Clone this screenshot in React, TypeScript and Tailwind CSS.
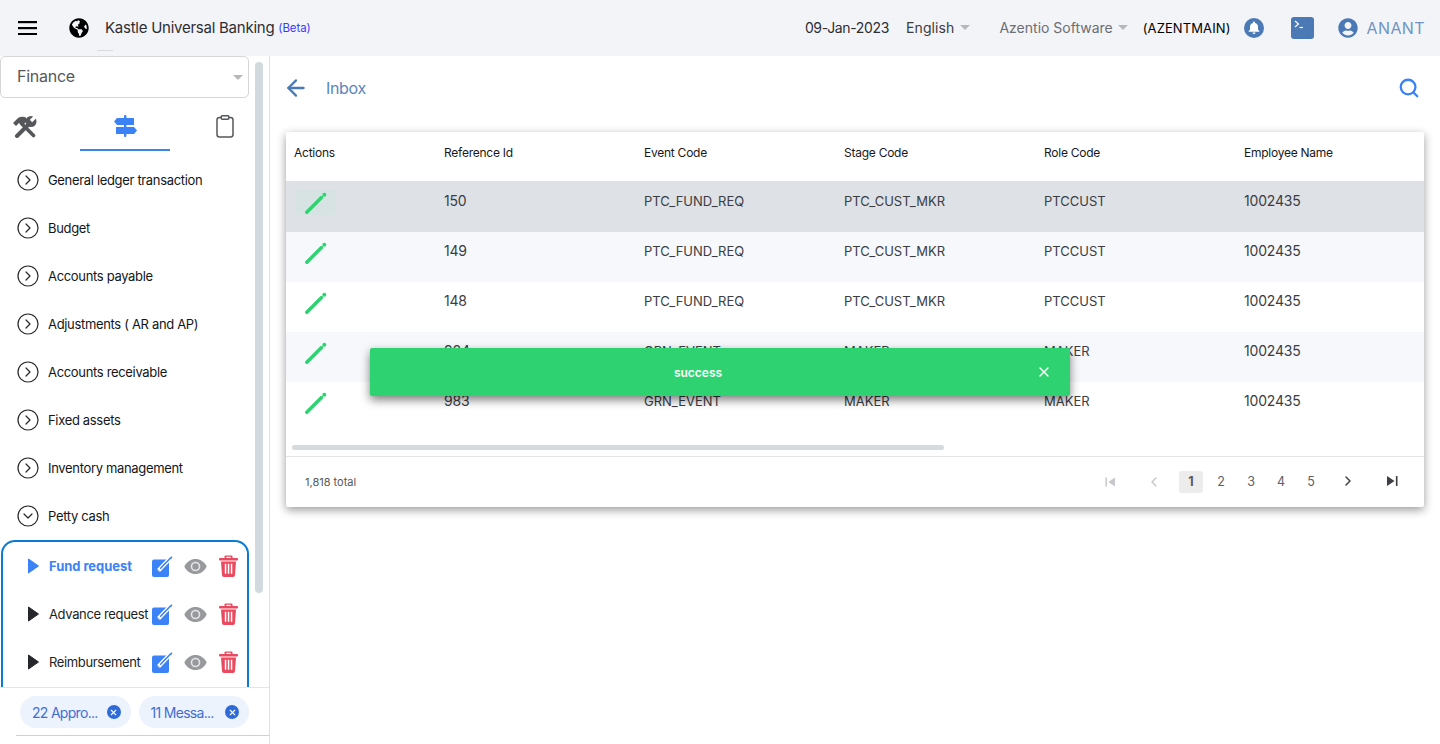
import React from "react";
import { ArrowLeft, Search, CircleChevronRight, CircleChevronDown, ChevronLeft, ChevronRight, X } from "lucide-react";
import { FaGlobeAmericas, FaUserCircle } from "react-icons/fa";

const menu = ["General ledger transaction", "Budget", "Accounts payable", "Adjustments ( AR and AP)", "Accounts receivable", "Fixed assets", "Inventory management"];
const rows = [
  ["150", "PTC_FUND_REQ", "PTC_CUST_MKR", "PTCCUST", "1002435"],
  ["149", "PTC_FUND_REQ", "PTC_CUST_MKR", "PTCCUST", "1002435"],
  ["148", "PTC_FUND_REQ", "PTC_CUST_MKR", "PTCCUST", "1002435"],
  ["984", "GRN_EVENT", "MAKER", "MAKER", "1002435"],
  ["983", "GRN_EVENT", "MAKER", "MAKER", "1002435"],
];
const rowBg = ["bg-[#dee1e6] h-[51px] pt-[11px]", "bg-[#f7f8fb] h-[50px] pt-[10px]", "bg-white h-[50px] pt-[10px]", "bg-[#f7f8fb] h-[50px] pt-[10px]", "bg-white h-[50px] pt-[10px]"];

function Caret() {
  return <span className="inline-block w-0 h-0 border-x-[5px] border-x-transparent border-t-[5px] border-t-[#b5b7bb]" />;
}

function Pen() {
  return (
    <svg width="22" height="22" viewBox="0 0 22 22" fill="none">
      <path d="M1.800 20.200 L16.500 5.500" stroke="#2ed271" strokeWidth="3.400" strokeLinecap="round" />
      <circle cx="19.300" cy="2.700" r="2" fill="#2ed271" />
    </svg>
  );
}

function ToolsIcon() {
  return (
    <svg width="24" height="22" viewBox="0 0 24 22" fill="#55575a">
      <path d="M9 8 L20.500 19.500" stroke="#55575a" strokeWidth="3.600" strokeLinecap="round" />
      <path d="M0 7 L5 2 Q8 0 12 1 L15 4 L9 10 L6 7 L3 10 Z" />
      <path d="M17 7 L4 20" stroke="#55575a" strokeWidth="4" strokeLinecap="round" />
      <circle cx="18" cy="5.500" r="5.500" />
      <path d="M18 5 L24 -1" stroke="#fff" strokeWidth="3.400" />
    </svg>
  );
}

function EyeIcon() {
  return (
    <svg width="23" height="17" viewBox="0 0 23 17">
      <path d="M0.300 8.500 C5 -1.500 18 -1.500 22.700 8.500 C18 18.500 5 18.500 0.300 8.500 Z" fill="#97999d" />
      <circle cx="11.500" cy="8.500" r="4.800" fill="#e4e5e6" />
      <circle cx="11.500" cy="8.500" r="3.200" fill="#97999d" />
    </svg>
  );
}

function EditIcon() {
  return (
    <svg width="21" height="21" viewBox="0 0 21 21">
      <rect x="0" y="3.500" width="17" height="17.500" rx="2" fill="#3b82f6" />
      <path d="M6.500 14.500 L18 2.500" stroke="#fff" strokeWidth="4" />
      <path d="M6.500 14.500 L18 2.500 L20 1" stroke="#3b82f6" strokeWidth="1.600" fill="none" />
      <path d="M6 15 L7 11.500 L9.500 14 Z" fill="#fff" />
    </svg>
  );
}

function TrashIcon() {
  return (
    <svg width="19" height="22" viewBox="0 0 19 22" fill="#ea4a5f">
      <path d="M6.500 0.500 h6 a1 1 0 0 1 1 1 v1.500 h4.500 a1 1 0 0 1 0 2.400 h-17 a1 1 0 0 1 0 -2.400 h4.500 v-1.500 a1 1 0 0 1 1 -1 z M7.300 1.800 v1.200 h4.400 v-1.200 z" fillRule="evenodd" />
      <path d="M2 6.500 h15 l-1 13.500 a2 2 0 0 1 -2 2 h-9 a2 2 0 0 1 -2 -2 z M5.800 8.800 v10 h1.500 v-10 z M8.800 8.800 v10 h1.500 v-10 z M11.800 8.800 v10 h1.500 v-10 z" fillRule="evenodd" />
    </svg>
  );
}

function SignsIcon() {
  return (
    <svg width="23" height="22" viewBox="0 0 23 22" fill="#3b82f6">
      <rect x="10" y="0" width="2.400" height="22" rx="1" />
      <path d="M0 6.500 L3 3 H20 V10 H3 Z" />
      <path d="M2 12 H20 L23 15.500 L20 19 H2 Z" />
    </svg>
  );
}

function ClipboardIcon() {
  return (
    <svg width="18" height="23" viewBox="0 0 18 23" fill="none" stroke="#55575a" strokeWidth="1.500">
      <rect x="1" y="2.500" width="16" height="19.500" rx="2.500" />
      <rect x="5.200" y="0.800" width="7.600" height="3.400" rx="1" fill="#fff" />
    </svg>
  );
}

function SubItem({ label, active }: { label: string; active?: boolean }) {
  return (
    <div className="h-12 flex items-center pl-[25px] relative">
      <svg width="11" height="16" viewBox="0 0 11 16" className="shrink-0">
        <path d="M0.500 1 L10.500 8 L0.500 15 Z" fill={active ? "#3b82f6" : "#25272b"} stroke={active ? "#3b82f6" : "#25272b"} strokeLinejoin="round" />
      </svg>
      <span className={`ml-[10px] w-[103px] whitespace-nowrap text-[13px] mt-[1px] ${active ? "font-bold text-[#3b82f6] tracking-[-0.05px]" : "text-[#1c1e22] tracking-[-0.36px]"}`}>{label}</span>
      <span className="shrink-0"><EditIcon /></span>
      <span className="ml-[11px] flex"><EyeIcon /></span>
      <span className="ml-[12px]"><TrashIcon /></span>
    </div>
  );
}

function Chip({ label }: { label: string }) {
  return (
    <div className="h-8 rounded-2xl bg-[#edf3fd] flex items-center pl-3 pr-[10px] text-[14px] tracking-[-0.7px] text-[#3f6ed6] w-[110.500px] justify-between">
      <span className="whitespace-nowrap">{label}</span>
      <span className="w-[14px] h-[14px] rounded-full bg-[#2f6bd8] flex items-center justify-center">
        <X size={9} color="#fff" strokeWidth={3} />
      </span>
    </div>
  );
}

function PageEdge({ last, color }: { last?: boolean; color: string }) {
  return (
    <svg width="12" height="12" viewBox="0 0 12 12" style={last ? { transform: "scaleX(-1)" } : undefined}>
      <rect x="0.500" y="1" width="1.600" height="10" fill={color} />
      <path d="M11 1 L3.500 6 L11 11 Z" fill={color} />
    </svg>
  );
}

export default function App() {
  return (
    <div className="w-[1440px] h-[744px] overflow-hidden flex flex-col bg-white relative font-['Inter',sans-serif]">
      <header className="h-14 shrink-0 bg-[#f3f4f8] flex items-center relative">
        <svg width="20" height="14" viewBox="0 0 20 14" className="ml-[18px]">
          <rect y="0" width="19" height="2.200" fill="#000" />
          <rect y="6" width="19" height="2.200" fill="#000" />
          <rect y="12" width="19" height="2.200" fill="#000" />
        </svg>
        <span className="ml-[31px] text-black"><FaGlobeAmericas size={20} /></span>
        <span className="ml-4 text-[15px] tracking-[-0.25px] text-[#2c2e33] whitespace-nowrap">Kastle Universal Banking</span>
        <span className="ml-[4px] mt-[2px] text-[11.500px] tracking-[-0.1px] text-[#3c3cf5]">(Beta)</span>
        <div className="ml-auto flex items-center pr-[15px] text-[14px]">
          <span className="text-[#2c2e33] tracking-[-0.35px] -mt-[2px]">09-Jan-2023</span>
          <span className="ml-[17px] text-[#3a3c40] tracking-[0.1px] -mt-[2px]">English</span>
          <span className="ml-[6px] mb-[2px] flex"><Caret /></span>
          <span className="ml-[29px] text-[#6b6e73] -mt-[2px]">Azentio Software</span>
          <span className="ml-[5px] mb-[2px] flex"><Caret /></span>
          <span className="ml-[15px] text-[13px] text-black tracking-[0.1px] translate-y-[1px]">(AZENTMAIN)</span>
          <span className="ml-[14px] w-5 h-5 rounded-full bg-[#4a79b5] flex items-center justify-center">
            <svg width="12" height="14" viewBox="0 0 12 14" fill="#fff">
              <path d="M6 0.500 a1 1 0 0 1 1 1 v0.400 c2 .5 3 2 3 4 v2.600 l1.400 1.700 v.6 h-10.800 v-.6 l1.400 -1.700 v-2.600 c0 -2 1 -3.500 3 -4 v-.4 a1 1 0 0 1 1 -1 z" />
              <path d="M4.500 11.500 h3 a1.500 1.500 0 0 1 -3 0 z" />
            </svg>
          </span>
          <span className="ml-[27px] w-[23px] h-[22px] rounded-[3px] bg-[#4a79b5] flex items-start pt-[3px] pl-[3px]">
            <svg width="12" height="10" viewBox="0 0 12 10" fill="none" stroke="#fff" strokeWidth="1.200">
              <path d="M1 1 L4.500 4 L1 7" />
              <path d="M5.500 7.500 H9" />
            </svg>
          </span>
          <span className="ml-[24px] text-[#4a79b5]"><FaUserCircle size={20} /></span>
          <span className="ml-[8px] text-[16px] tracking-[0.4px] text-[#6f94c4]">ANANT</span>
        </div>
        <span className="absolute left-[97px] top-[50px] w-4 h-px bg-[#d8dade]" />
      </header>

      <div className="flex-1 flex min-h-0">
        <aside className="w-[270px] shrink-0 border-r border-[#dcdfe3] flex flex-col relative">
          <div className="flex-1 min-h-0 overflow-hidden">
            <div className="w-[250px]">
              <div className="w-[249px] h-[42px] border border-[#d4d6da] rounded-[5px] flex items-center pl-4 pr-[5px] justify-between">
                <span className="text-[16px] tracking-[-0.25px] text-[#55585d] -mt-[2px]">Finance</span>
                <Caret />
              </div>
              <div className="h-[53px] flex">
                <div className="w-[50px] flex items-center justify-center pt-1">
                  <ToolsIcon />
                </div>
                <div className="ml-[30px] w-[90px] flex items-center justify-center border-b-2 border-[#3b82f6] pt-1">
                  <SignsIcon />
                </div>
                <div className="ml-[30px] w-[50px] flex items-center justify-center pt-1">
                  <ClipboardIcon />
                </div>
              </div>
              <div className="pt-[5px]">
                {menu.map((m) => (
                  <div key={m} className="h-12 flex items-center pl-[16px] gap-[8px] text-[13px] tracking-[-0.33px] text-[#14161a]">
                    <CircleChevronRight size={24} strokeWidth={1.200} color="#26282c" />
                    <span className="mt-[1px]">{m}</span>
                  </div>
                ))}
                <div className="h-12 flex items-center pl-[16px] gap-[8px] text-[13px] tracking-[-0.33px] text-[#14161a]">
                  <CircleChevronDown size={24} strokeWidth={1.200} color="#26282c" />
                  <span className="mt-[1px]">Petty cash</span>
                </div>
                <div className="ml-px w-[248px] border-2 border-[#0b7cd2] rounded-[14px] h-[240px]">
                  <SubItem label="Fund request" active />
                  <SubItem label="Advance request" />
                  <SubItem label="Reimbursement" />
                </div>
              </div>
            </div>
          </div>
          <span className="absolute left-[255px] top-[6px] w-2 h-[531px] rounded bg-[#d3dadf]" />
          <div className="h-[57px] shrink-0 bg-white border-t border-[#e3e5e8] relative">
            <div className="flex gap-2 pl-5 pt-2">
              <Chip label="22 Appro..." />
              <Chip label="11 Messa..." />
            </div>
            <div className="ml-4 mt-[7px] border-t border-[#cfd1d4]" />
          </div>
        </aside>

        <main className="flex-1 min-w-0 pl-4 pr-4 relative">
          <div className="h-[76px] flex items-center justify-between pr-[4px] pb-[12px]">
            <div className="flex items-center">
              <ArrowLeft size={26} strokeWidth={2.100} color="#4a79b5" className="-ml-[3px]" />
              <span className="ml-[17px] text-[16px] tracking-[-0.35px] text-[#5c85bb]">Inbox</span>
            </div>
            <Search size={22} color="#3b82f6" strokeWidth={2.500} />
          </div>
          <section className="w-[1138px] h-[375px] bg-white rounded-[2px] shadow-[0_3px_10px_rgba(0,0,0,0.4)] flex flex-col">
            <div className="grid grid-cols-[150px_200px_200px_200px_200px_188px] h-[49px] items-center text-[12px] tracking-[-0.25px] text-[#17191d] pl-2 pb-[7px]">
              <span>Actions</span>
              <span>Reference Id</span>
              <span>Event Code</span>
              <span>Stage Code</span>
              <span>Role Code</span>
              <span>Employee Name</span>
            </div>
            {rows.map((r, i) => (
              <div key={r[0]} className={`grid grid-cols-[150px_200px_200px_200px_200px_188px] text-[13px] text-[#3b3d42] pl-2 ${rowBg[i]}`}>
                <span className="relative">
                  {i === 0 && <span className="absolute left-[2px] -top-[2px] w-10 h-[25px] bg-[#d7e3e2] rounded-[2px]" />}
                  <span className="absolute left-[11px] top-0"><Pen /></span>
                </span>
                {r.map((c, j) => <span key={j} className={`leading-[18px] ${/^\d+$/.test(c) ? "text-[14px] tracking-[-0.2px]" : ""}`}>{c}</span>)}
              </div>
            ))}
            <div className="h-[24px] pl-[6px] pt-[13px]">
              <div className="w-[652px] h-[5px] rounded bg-[#d5dadd]" />
            </div>
            <div className="flex-1 border-t border-[#e3e4e6] flex items-center pl-[19px] pr-[26px] justify-between">
              <span className="text-[11px] text-[#55585d]">1,818 total</span>
              <div className="flex items-center text-[12.500px] text-[#5d6065]">
                <span className="w-[11px] flex"><PageEdge color="#c6c8cb" /></span>
                <span className="ml-[30px]"><ChevronLeft size={16} color="#c4c6c9" /></span>
                <span className="ml-[17px] w-6 h-[22px] bg-[#ececec] rounded-[3px] font-bold text-[#55585d] flex items-center justify-center">1</span>
                <span className="w-[30px] text-center ml-[3px]">2</span>
                <span className="w-[30px] text-center">3</span>
                <span className="w-[30px] text-center">4</span>
                <span className="w-[30px] text-center">5</span>
                <span className="ml-[14px] -mt-[2px]"><ChevronRight size={16} strokeWidth={2.400} color="#45474b" /></span>
                <span className="ml-[30px] flex -mt-[2px]"><PageEdge last color="#3c3e42" /></span>
              </div>
            </div>
          </section>
        </main>
      </div>

      <div className="absolute left-[370px] top-[348px] w-[700px] h-12 bg-[#2ed271] rounded-[2px] shadow-[0_4px_10px_rgba(0,0,0,0.5)] flex items-center justify-center text-white text-[12px] font-semibold pr-[44px] pt-[2px]">
        success
        <span className="absolute right-[18px] top-[16px]"><X size={16} color="#fff" strokeWidth={2} /></span>
      </div>
    </div>
  );
}
